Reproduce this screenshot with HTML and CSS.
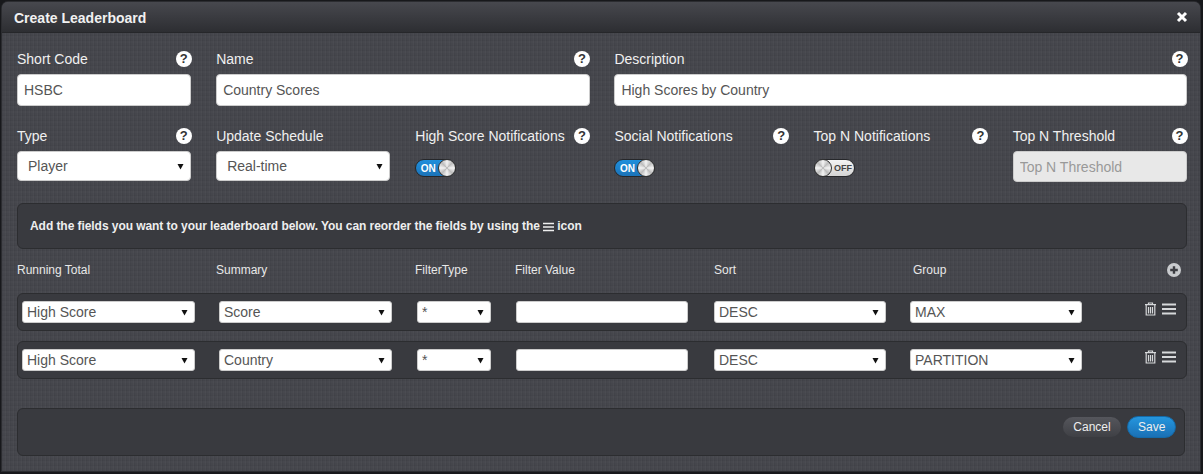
FILE: index.html
```html
<!DOCTYPE html>
<html lang="en">
<head>
    <meta charset="UTF-8">
    <title>Create Leaderboard</title>
    <link rel="stylesheet" href="styles.css">
</head>
<body>
    <div class="modal">
        <div class="modal-header">
            <h3>Create Leaderboard</h3>
            <svg class="close" width="12" height="12" viewBox="0 0 12 12"><path d="M2 2 10 10M10 2 2 10" stroke="#fff" stroke-width="3" fill="none"/></svg>
        </div>
        <form class="modal-body">
            <div class="form-grid">
                <div class="field">
                    <div class="field-label"><label>Short Code</label><span class="help">?</span></div>
                    <input class="text-input" type="text" value="HSBC">
                </div>
                <div class="field span-2">
                    <div class="field-label"><label>Name</label><span class="help">?</span></div>
                    <input class="text-input" type="text" value="Country Scores">
                </div>
                <div class="field span-3">
                    <div class="field-label"><label>Description</label><span class="help">?</span></div>
                    <input class="text-input" type="text" value="High Scores by Country">
                </div>
            </div>
            <div class="form-grid second">
                <div class="field">
                    <div class="field-label"><label>Type</label><span class="help">?</span></div>
                    <select class="big-select"><option>Player</option></select>
                </div>
                <div class="field">
                    <div class="field-label"><label>Update Schedule</label></div>
                    <select class="big-select"><option>Real-time</option></select>
                </div>
                <div class="field">
                    <div class="field-label"><label>High Score Notifications</label><span class="help">?</span></div>
                    <div class="toggle on"><span class="toggle-text">ON</span><span class="knob"></span></div>
                </div>
                <div class="field">
                    <div class="field-label"><label>Social Notifications</label><span class="help">?</span></div>
                    <div class="toggle on"><span class="toggle-text">ON</span><span class="knob"></span></div>
                </div>
                <div class="field">
                    <div class="field-label"><label>Top N Notifications</label><span class="help">?</span></div>
                    <div class="toggle off"><span class="knob"></span><span class="toggle-text">OFF</span></div>
                </div>
                <div class="field">
                    <div class="field-label"><label>Top N Threshold</label><span class="help">?</span></div>
                    <input class="text-input small" type="text" placeholder="Top N Threshold" disabled>
                </div>
            </div>

            <div class="panel info">
                Add the fields you want to your leaderboard below. You can reorder the fields by using the
                <svg class="bars-small" width="11" height="10" viewBox="0 0 11 10"><path d="M0 1.5H11M0 5H11M0 8.5H11" stroke="#eee" stroke-width="1.6"/></svg>
                icon
            </div>

            <div class="col-heads">
                <span>Running Total</span>
                <span>Summary</span>
                <span>FilterType</span>
                <span>Filter Value</span>
                <span>Sort</span>
                <span>Group</span>
                <svg class="add" width="14" height="14" viewBox="0 0 14 14"><circle cx="7" cy="7" r="7" fill="#c9cbce"/><path d="M7 3.2V10.8M3.2 7H10.8" stroke="#3c3d42" stroke-width="2.4"/></svg>
            </div>

            <div class="panel field-row">
                <select class="mini"><option>High Score</option></select>
                <select class="mini"><option>Score</option></select>
                <select class="mini"><option>*</option></select>
                <input class="mini-input" type="text">
                <select class="mini short"><option>DESC</option></select>
                <select class="mini short"><option>MAX</option></select>
                <div class="row-icons">
                    <svg width="13" height="14" viewBox="0 0 13 14"><path d="M4.5 2V1H8.5V2M1 2.7H12M2.2 3V13H10.8V3M4.5 5V11.5M6.5 5V11.5M8.5 5V11.5" stroke="#d6d8da" stroke-width="1.2" fill="none"/></svg>
                    <svg width="14" height="12" viewBox="0 0 14 12"><path d="M0 1.5H14M0 6H14M0 10.5H14" stroke="#d6d8da" stroke-width="2.2"/></svg>
                </div>
            </div>
            <div class="panel field-row">
                <select class="mini"><option>High Score</option></select>
                <select class="mini"><option>Country</option></select>
                <select class="mini"><option>*</option></select>
                <input class="mini-input" type="text">
                <select class="mini short"><option>DESC</option></select>
                <select class="mini short"><option>PARTITION</option></select>
                <div class="row-icons">
                    <svg width="13" height="14" viewBox="0 0 13 14"><path d="M4.5 2V1H8.5V2M1 2.7H12M2.2 3V13H10.8V3M4.5 5V11.5M6.5 5V11.5M8.5 5V11.5" stroke="#d6d8da" stroke-width="1.2" fill="none"/></svg>
                    <svg width="14" height="12" viewBox="0 0 14 12"><path d="M0 1.5H14M0 6H14M0 10.5H14" stroke="#d6d8da" stroke-width="2.2"/></svg>
                </div>
            </div>

            <div class="panel footer">
                <button type="button" class="btn cancel">Cancel</button>
                <button type="button" class="btn save">Save</button>
            </div>
        </form>
    </div>
</body>
</html>
```

FILE: styles.css
```css
html, body {
    margin: 0;
    padding: 0;
    height: 100%;
    overflow: hidden;
}
body {
    background: #17181b;
    font-family: "Liberation Sans", Arial, sans-serif;
}
.modal {
    margin: 2px 3px 0 2px;
    height: 469px;
    box-sizing: border-box;
    border-radius: 6px 6px 0 0;
    overflow: hidden;
    box-shadow: 0 0 0 1px #2b2c30;
    background-color: #45464c;
    background-image:
        repeating-linear-gradient(0deg, rgba(0,0,0,0.03) 0, rgba(0,0,0,0.03) 1px, transparent 1px, transparent 3px, rgba(255,255,255,0.012) 3px, rgba(255,255,255,0.012) 5px),
        repeating-linear-gradient(90deg, rgba(0,0,0,0.045) 0, rgba(0,0,0,0.045) 1px, transparent 1px, transparent 3px, rgba(255,255,255,0.02) 3px, rgba(255,255,255,0.02) 4px);
}
.modal-header {
    height: 31px;
    padding: 0 12px;
    display: flex;
    justify-content: space-between;
    align-items: center;
    background: linear-gradient(#47484e, #2d2e32);
    border-bottom: 1px solid #26272a;
    box-sizing: border-box;
}
.modal-header h3 {
    margin: 2px 0 0;
    font-size: 14px;
    font-weight: bold;
    color: #f1f1f1;
}
.modal-body {
    display: block;
    padding: 16px 13px 0 15px;
}
.form-grid {
    display: grid;
    grid-template-columns: repeat(6, 1fr);
    column-gap: 24.8px;
}
.form-grid.second {
    margin-top: 20px;
}
.span-2 {
    grid-column: span 2;
}
.span-3 {
    grid-column: span 3;
}
.field-label {
    display: flex;
    justify-content: space-between;
    align-items: center;
    height: 20px;
    margin-bottom: 5px;
    color: #f0f0f0;
    font-size: 14px;
}
.help {
    width: 16px;
    height: 16px;
    margin-right: -0.5px;
    border-radius: 50%;
    background: #fff;
    color: #333;
    font-size: 13px;
    font-weight: bold;
    line-height: 16px;
    text-align: center;
}
.text-input {
    display: block;
    width: 100%;
    height: 32px;
    box-sizing: border-box;
    padding: 0 6px;
    border: 1px solid #ccc;
    border-radius: 4px;
    background: #fff;
    color: #555;
    font: 14px "Liberation Sans", Arial, sans-serif;
}
.text-input.small {
    height: 31px;
}
.text-input:disabled {
    background: #e8e8e8;
}
.text-input::placeholder {
    color: #999;
}
.big-select, .mini {
    appearance: none;
    box-sizing: border-box;
    border: 1px solid #ccc;
    background: #fff url("data:image/svg+xml,%3Csvg xmlns='http://www.w3.org/2000/svg' width='7' height='7'%3E%3Cpath d='M0.5 1H6.5L3.5 6.5Z' fill='%23111'/%3E%3C/svg%3E") no-repeat right 6px center;
    color: #555;
    font: 14px "Liberation Sans", Arial, sans-serif;
}
.big-select {
    display: block;
    width: 100%;
    height: 30px;
    padding-left: 10px;
    border-radius: 4px;
}
.toggle {
    display: flex;
    align-items: center;
    width: 41px;
    height: 18px;
    box-sizing: border-box;
    border: 1px solid #26272a;
    border-radius: 9px;
    font-size: 10px;
    font-weight: bold;
}
.toggle.on {
    background: linear-gradient(#1f8fdc, #1b73b8);
    color: #fff;
}
.toggle.off {
    background: linear-gradient(#f4f4f4, #d4d4d4);
    color: #444;
}
.toggle-text {
    flex: 1;
    text-align: center;
}
.toggle.on .toggle-text {
    padding-left: 1px;
}
.toggle.off .toggle-text {
    margin-left: 2px;
    font-size: 9px;
}
.knob {
    flex: 0 0 18px;
    height: 18px;
    margin: -1px;
    box-sizing: border-box;
    border: 1.5px solid #333;
    border-radius: 50%;
    background: conic-gradient(#f4f4f4, #bdbdbd 45deg, #f4f4f4 90deg, #bdbdbd 135deg, #f4f4f4 180deg, #bdbdbd 225deg, #f4f4f4 270deg, #bdbdbd 315deg, #f4f4f4);
}
.field .toggle {
    margin-top: 13px;
}
.panel {
    box-sizing: border-box;
    border: 1px solid #2c2d30;
    border-radius: 6px;
    background: #393a3f;
}
.info {
    height: 46px;
    margin-top: 21px;
    padding-left: 12px;
    line-height: 44px;
    color: #eee;
    font-size: 12px;
    font-weight: bold;
    letter-spacing: -0.06px;
}
.bars-small {
    vertical-align: -2px;
}
.col-heads {
    display: grid;
    grid-template-columns: 199px 199px 100px 199px 199px 1fr 14px;
    align-items: center;
    height: 16px;
    margin-top: 13px;
    color: #e8e8e8;
    font-size: 12px;
}
.add {
    margin-left: -6px;
}
.field-row {
    display: grid;
    grid-template-columns: 197px 198px 99px 198px 196px 234px 1fr;
    align-items: start;
    height: 38px;
    margin-top: 15px;
    padding: 7px 0 0 4px;
}
.field-row + .field-row {
    margin-top: 10px;
}
.mini {
    width: 173px;
    height: 22px;
    padding-left: 4px;
    border-radius: 3px;
}
.mini.short {
    width: 172px;
}
.field-row .mini:nth-child(3) {
    width: 74px;
}
.mini-input {
    width: 172px;
    height: 22px;
    box-sizing: border-box;
    border: 1px solid #ccc;
    border-radius: 3px;
    background: #fff;
}
.row-icons {
    display: flex;
    align-items: center;
    gap: 5px;
    margin-top: 1px;
}
.footer {
    display: flex;
    justify-content: flex-end;
    align-items: center;
    gap: 6px;
    height: 48px;
    margin: 29px 2px 0 0;
    padding: 0 8px 10px 0;
}
.btn {
    height: 20px;
    padding: 0 10px;
    border: none;
    border-radius: 10px;
    color: #eee;
    font: 12px "Liberation Sans", Arial, sans-serif;
}
.cancel {
    width: 58px;
    background: linear-gradient(#55565c, #3f4045);
}
.save {
    width: 49px;
    height: 22px;
    border-radius: 11px;
    border: 1px solid #146aa8;
    background: linear-gradient(#2596de, #1a70b5);
}
```
